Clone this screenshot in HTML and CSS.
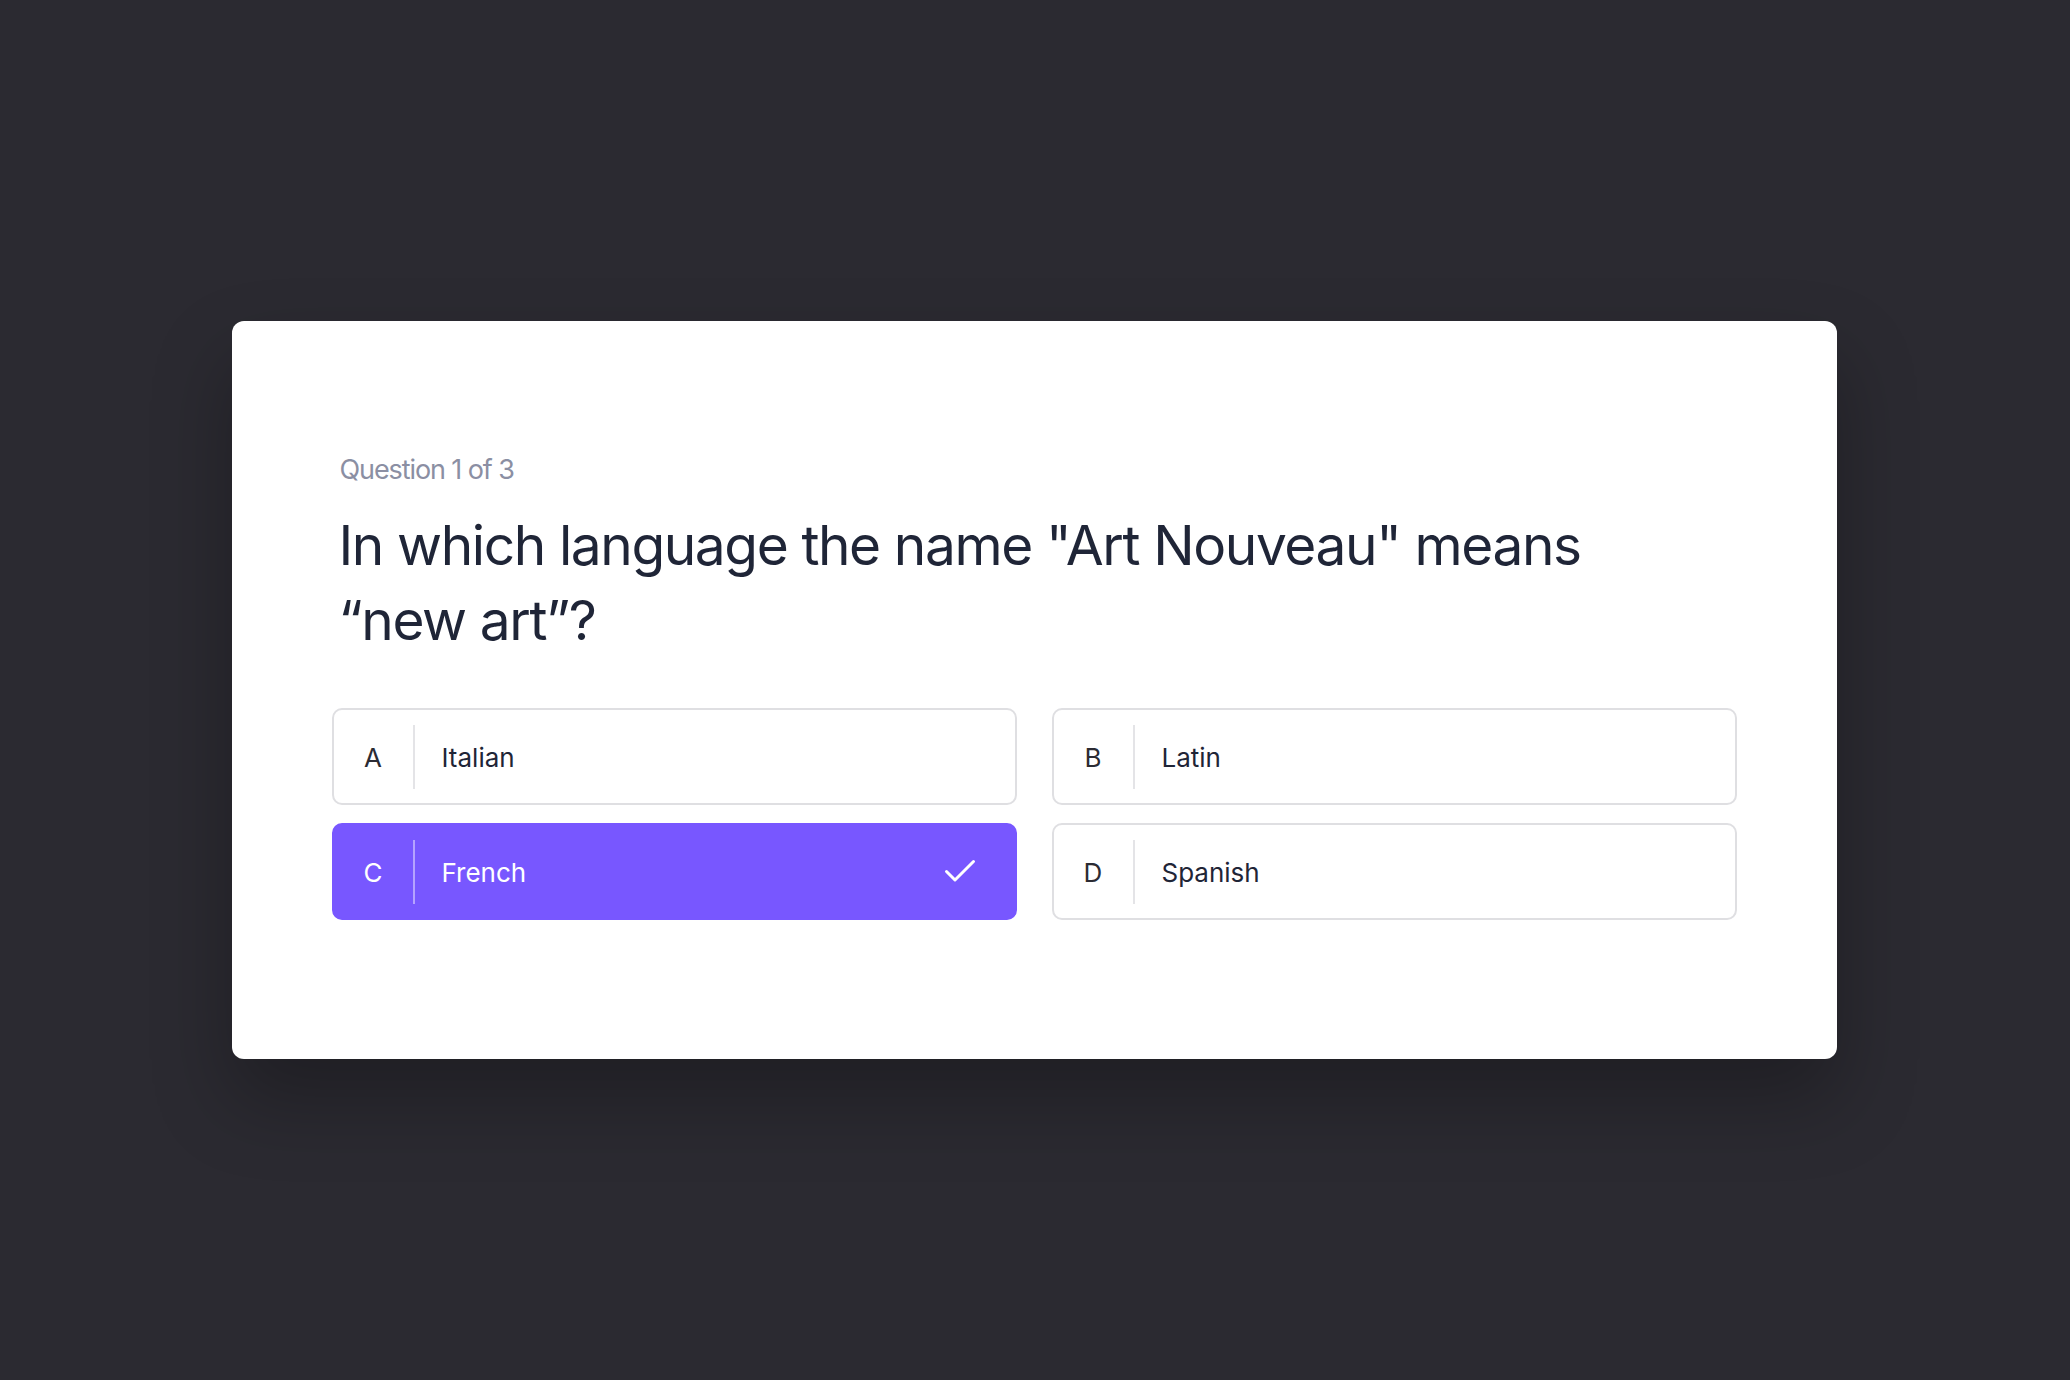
FILE: index.html
```html
<!DOCTYPE html>
<html lang="en">
<head>
<meta charset="utf-8">
<title>Quiz</title>
<link rel="stylesheet" href="styles.css">
</head>
<body>
<main class="stage">
  <section class="card">
    <p class="counter">Question 1 of 3</p>
    <h1 class="question">In which language the name "Art Nouveau" means<br>“new art”?</h1>
    <div class="options">
      <div class="option">
        <span class="letter">A</span><span class="divider"></span><span class="label">Italian</span>
      </div>
      <div class="option">
        <span class="letter">B</span><span class="divider"></span><span class="label">Latin</span>
      </div>
      <div class="option option-selected">
        <span class="letter">C</span><span class="divider"></span><span class="label">French</span>
        <svg class="check" width="32" height="24" viewBox="0 0 32 24" aria-hidden="true"><path d="M2.5 12.5 L11 21 L29.5 2.5" fill="none" stroke="#ffffff" stroke-width="3" stroke-linecap="round" stroke-linejoin="round"/></svg>
      </div>
      <div class="option">
        <span class="letter">D</span><span class="divider"></span><span class="label">Spanish</span>
      </div>
    </div>
  </section>
</main>
</body>
</html>
```

FILE: styles.css
```css
* { box-sizing: border-box; }
html, body { margin: 0; padding: 0; }
body {
  background: #2b2a31;
  font-family: Inter, "Noto Sans", "Liberation Sans", sans-serif;
}
.stage {
  width: 2070px;
  height: 1380px;
  display: flex;
  align-items: center;
  justify-content: center;
  padding-right: 2px;
}
.card {
  width: 1605px;
  height: 738px;
  background: #ffffff;
  border-radius: 12px;
  padding: 131px 101px 0 100px;
  box-shadow: 0 40px 80px rgba(0, 0, 0, 0.28);
}
.counter {
  margin: 0 0 20px 8px;
  font-size: 27px;
  line-height: 36px;
  color: #8b8fa3;
  font-weight: 400;
  letter-spacing: -1.1px;
}
.question {
  margin: 0 0 50px 7px;
  font-size: 55px;
  line-height: 75px;
  font-weight: 400;
  color: #1f2537;
  letter-spacing: -1.4px;
}
.options {
  display: grid;
  grid-template-columns: 685px 685px;
  column-gap: 35px;
  row-gap: 18px;
}
.option {
  height: 97px;
  border: 2px solid #dfdfe2;
  border-radius: 10px;
  display: flex;
  align-items: center;
  padding-top: 1px;
  font-size: 26px;
  color: #1f2537;
}
.letter {
  width: 79px;
  text-align: center;
  color: #2b2b33;
}
.divider {
  width: 2px;
  height: 64px;
  margin-top: -1px;
  background: #e4e4e7;
}
.label {
  padding-left: 27px;
}
.option-selected {
  background: #7857ff;
  border-color: #7857ff;
  color: #ffffff;
}
.option-selected .letter { color: #ffffff; }
.option-selected .divider { background: rgba(255, 255, 255, 0.45); }
.check {
  margin-left: auto;
  margin-right: 39px;
  margin-top: -3px;
}
```
